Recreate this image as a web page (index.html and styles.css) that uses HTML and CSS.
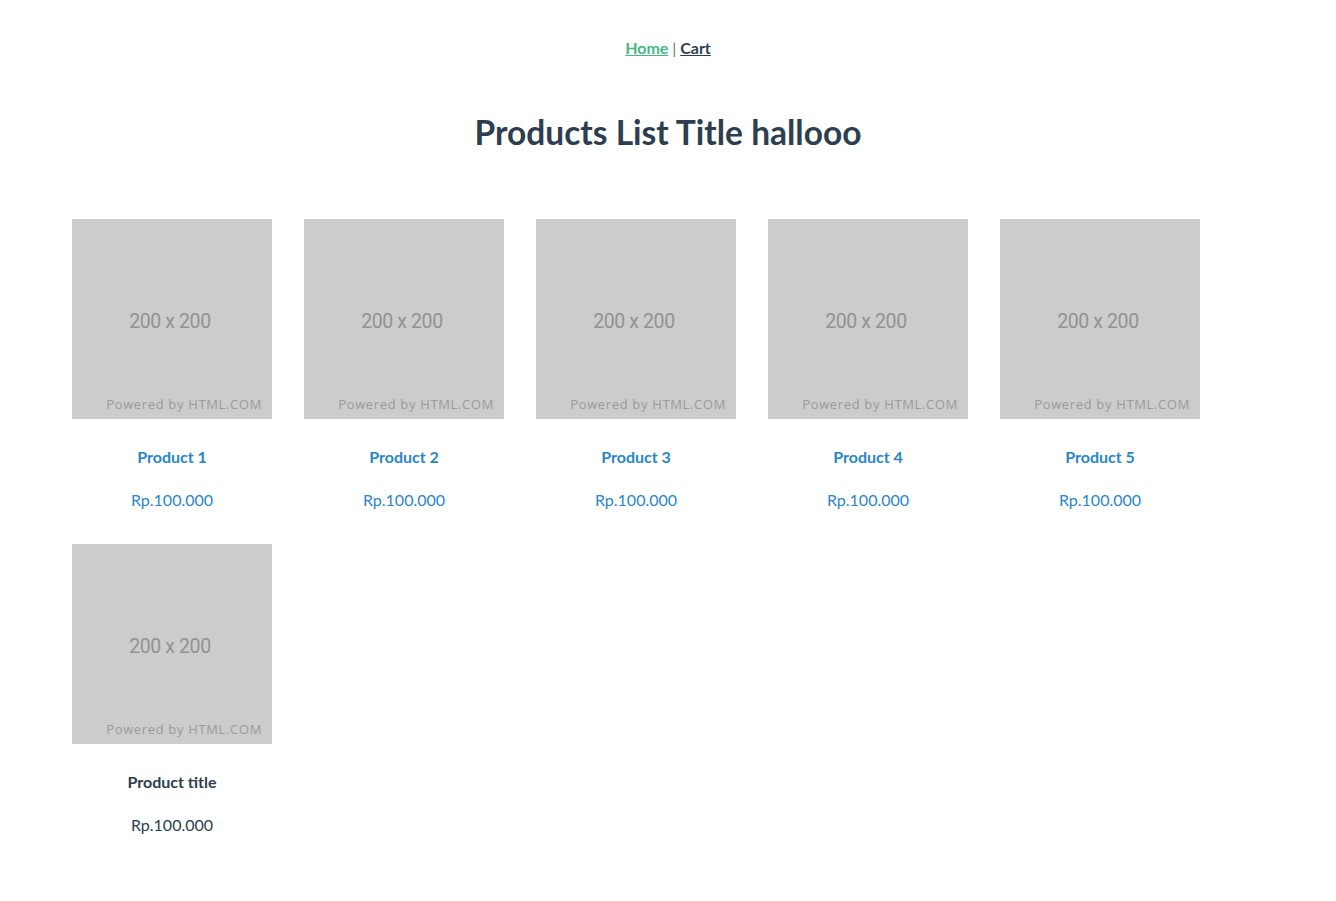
FILE: index.html
```html
<!DOCTYPE html>
<html>
<head>
<meta charset="utf-8">
<link rel="stylesheet" href="styles.css">
</head>
<body>
<div class="app">
  <nav class="nav">
    <a class="nav-link active" href="#">Home</a> <span class="sep">|</span> <a class="nav-link" href="#">Cart</a>
  </nav>
  <h1 class="title">Products List Title hallooo</h1>
  <div class="grid">
    <div class="card">
      <div class="ph"><span class="ph-size">200 x 200</span><span class="ph-pow">Powered by HTML.COM</span></div>
      <a class="p-name link" href="#">Product 1</a>
      <div class="p-price link">Rp.100.000</div>
    </div>
    <div class="card">
      <div class="ph"><span class="ph-size">200 x 200</span><span class="ph-pow">Powered by HTML.COM</span></div>
      <a class="p-name link" href="#">Product 2</a>
      <div class="p-price link">Rp.100.000</div>
    </div>
    <div class="card">
      <div class="ph"><span class="ph-size">200 x 200</span><span class="ph-pow">Powered by HTML.COM</span></div>
      <a class="p-name link" href="#">Product 3</a>
      <div class="p-price link">Rp.100.000</div>
    </div>
    <div class="card">
      <div class="ph"><span class="ph-size">200 x 200</span><span class="ph-pow">Powered by HTML.COM</span></div>
      <a class="p-name link" href="#">Product 4</a>
      <div class="p-price link">Rp.100.000</div>
    </div>
    <div class="card">
      <div class="ph"><span class="ph-size">200 x 200</span><span class="ph-pow">Powered by HTML.COM</span></div>
      <a class="p-name link" href="#">Product 5</a>
      <div class="p-price link">Rp.100.000</div>
    </div>
    <div class="card">
      <div class="ph"><span class="ph-size">200 x 200</span><span class="ph-pow">Powered by HTML.COM</span></div>
      <div class="p-name">Product title</div>
      <div class="p-price">Rp.100.000</div>
    </div>
  </div>
</div>
</body>
</html>
```
FILE: styles.css
```css
body {
  margin: 0;
  background: #fff;
  font-family: Lato, "Noto Sans", sans-serif;
  color: #2c3e50;
}
.app {
  padding-top: 38px;
}
.nav {
  text-align: center;
  font-size: 16px;
  font-weight: 700;
  line-height: 20px;
  color: #2c3e50;
}
.nav-link {
  color: #2c3e50;
  text-decoration: underline;
}
.nav-link.active {
  color: #42b983;
}
.sep {
  font-weight: 400;
  color: #6b7784;
}
.title {
  margin: 54px 0 0;
  text-align: center;
  font-size: 33.5px;
  font-weight: 700;
  line-height: 40px;
}
.grid {
  display: flex;
  flex-wrap: wrap;
  padding: 67px 56px 0;
}
.card {
  width: 200px;
  margin: 0 16px 0;
  height: 325px;
  display: flex;
  flex-direction: column;
  align-items: center;
}
.ph {
  width: 200px;
  height: 200px;
  background: #cccccc;
  position: relative;
  flex: none;
}
.ph-size {
  position: absolute;
  left: 0;
  width: 196px;
  top: 91px;
  text-align: center;
  font-family: Roboto, "Liberation Sans", sans-serif;
  font-size: 19.5px;
  color: #929292;
  letter-spacing: -0.4px;
}
.ph-pow {
  position: absolute;
  right: 10px;
  bottom: 6px;
  font-family: "Open Sans", "Noto Sans", sans-serif;
  font-size: 13px;
  color: #9a9a9a;
  letter-spacing: 0.65px;
}
.p-name {
  margin-top: 28px;
  font-size: 16px;
  font-weight: 700;
  line-height: 20px;
  color: #2c3e50;
  text-decoration: none;
}
.p-price {
  margin-top: 23px;
  font-size: 16px;
  line-height: 20px;
  color: #2c3e50;
}
.link {
  color: #2a87c4;
}
```
